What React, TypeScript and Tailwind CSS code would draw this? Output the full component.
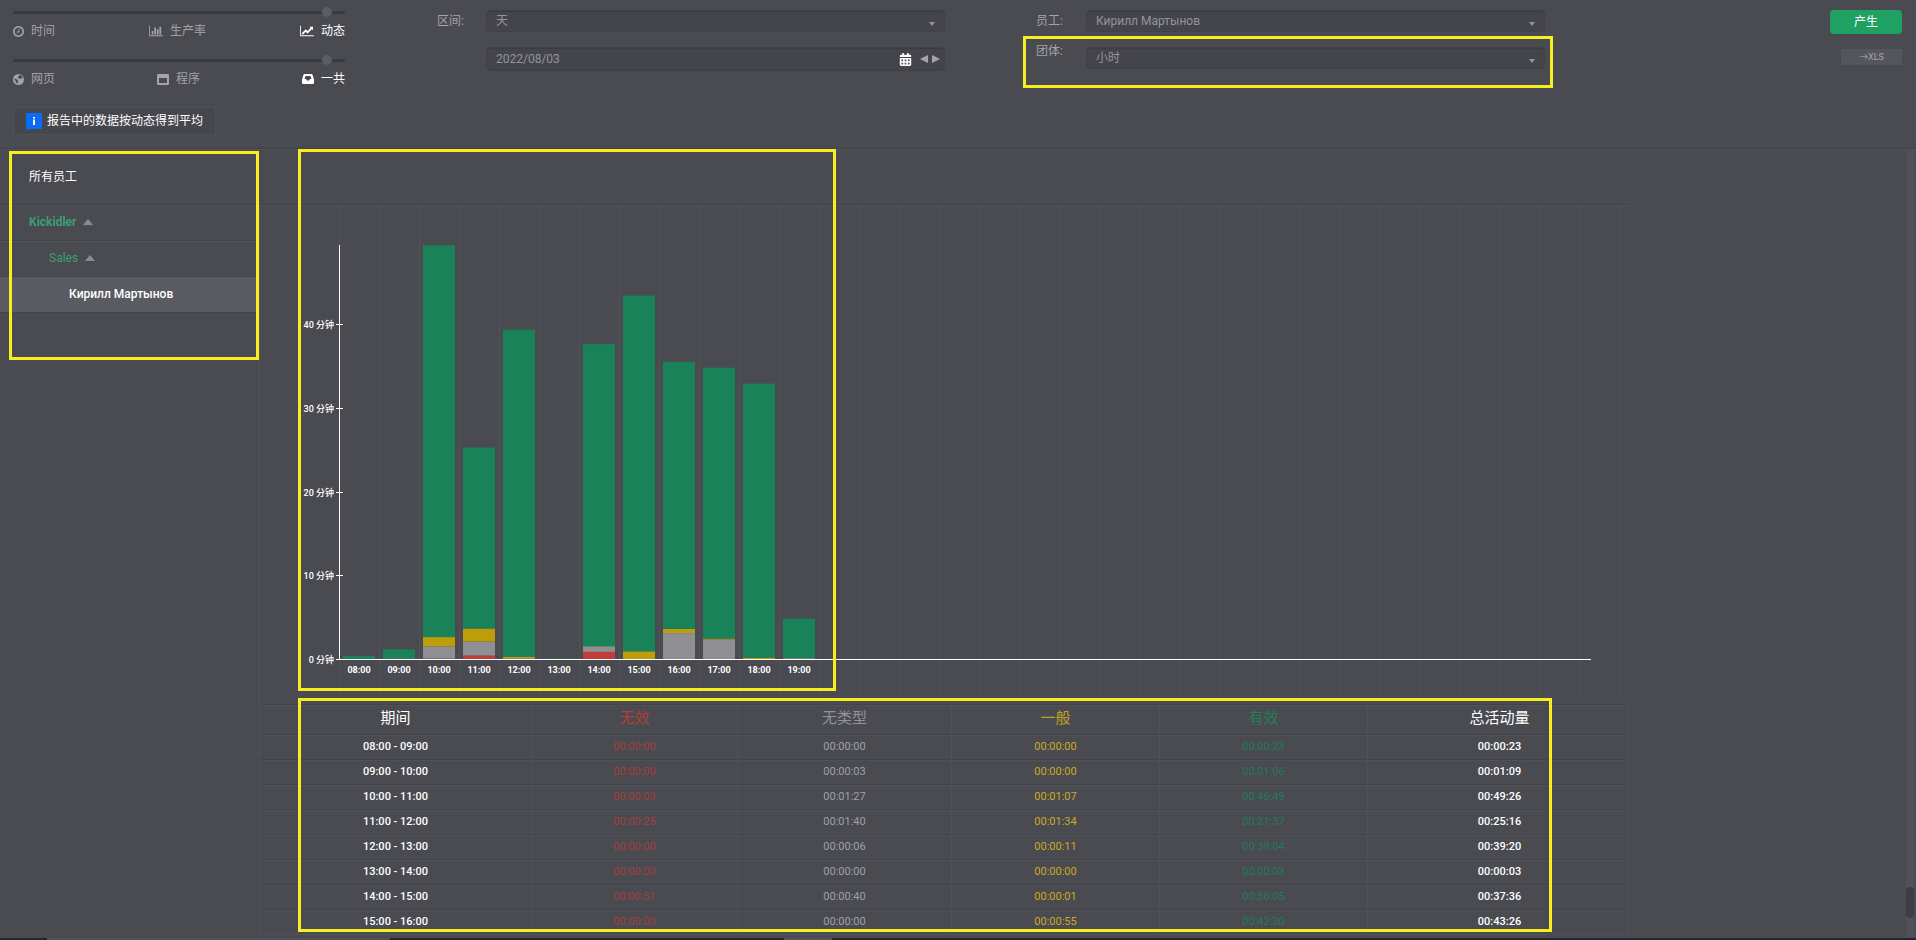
import { useState } from 'react';
import type { ReactNode } from 'react';
import { FaCalendarAlt } from 'react-icons/fa';

// One hour of activity, all durations in seconds
interface HourStat {
    from: string;
    to: string;
    unproductive: number;
    untyped: number;
    neutral: number;
    productive: number;
}

const stats: HourStat[] = [
    { from: '08:00', to: '09:00', unproductive: 0, untyped: 0, neutral: 0, productive: 23 },
    { from: '09:00', to: '10:00', unproductive: 0, untyped: 3, neutral: 0, productive: 66 },
    { from: '10:00', to: '11:00', unproductive: 3, untyped: 87, neutral: 67, productive: 2809 },
    { from: '11:00', to: '12:00', unproductive: 25, untyped: 100, neutral: 94, productive: 1297 },
    { from: '12:00', to: '13:00', unproductive: 0, untyped: 6, neutral: 11, productive: 2344 },
    { from: '13:00', to: '14:00', unproductive: 0, untyped: 0, neutral: 0, productive: 3 },
    { from: '14:00', to: '15:00', unproductive: 51, untyped: 40, neutral: 1, productive: 2165 },
    { from: '15:00', to: '16:00', unproductive: 0, untyped: 0, neutral: 55, productive: 2550 },
    { from: '16:00', to: '17:00', unproductive: 0, untyped: 186, neutral: 30, productive: 1914 },
    { from: '17:00', to: '18:00', unproductive: 0, untyped: 140, neutral: 7, productive: 1941 },
    { from: '18:00', to: '19:00', unproductive: 0, untyped: 0, neutral: 9, productive: 1965 },
    { from: '19:00', to: '20:00', unproductive: 0, untyped: 6, neutral: 0, productive: 283 },
];

const total = (s: HourStat) => s.unproductive + s.untyped + s.neutral + s.productive;

const formatTime = (sec: number) =>
    [Math.floor(sec / 3600), Math.floor(sec / 60) % 60, sec % 60]
        .map((n) => String(n).padStart(2, '0'))
        .join(':');

const reportedTotal: Record<string, number> = { '12:00': 2360, '14:00': 2256, '15:00': 2606 };

const ClockIcon = () => (
    <svg viewBox="128 128 1536 1536" className="size-[11px]" fill="currentColor" aria-hidden="true">
        <path d="M1024 544v448q0 14-9 23t-23 9h-320q-14 0-23-9t-9-23v-64q0-14 9-23t23-9h224v-352q0-14 9-23t23-9h64q14 0 23 9t9 23zm416 352q0-148-73-273t-198-198-273-73-273 73-198 198-73 273 73 273 198 198 273 73 273-73 198-198 73-273zm224 0q0 209-103 385.5t-279.5 279.5-385.5 103-385.5-103-279.500-279.500-103-385.500 103-385.500 279.500-279.500 385.500-103 385.500 103 279.500 279.500 103 385.500z" />
    </svg>
);

const BarsIcon = () => (
    <svg viewBox="0 0 2048 1792" className="h-3 w-3.5" fill="currentColor" aria-hidden="true">
        <path d="M640 896v512h-256v-512h256zm384-512v1024h-256v-1024h256zm1024 1152v128h-2048v-1536h128v1408h1920zm-640-896v768h-256v-768h256zm384-384v1152h-256v-1152h256z" />
    </svg>
);

const LineIcon = () => (
    <svg viewBox="0 0 2048 1792" className="h-3 w-3.5" fill="currentColor" aria-hidden="true">
        <path d="M2048 1536v128h-2048v-1536h128v1408h1920zm-128-1248v435q0 21-19.5 29.5t-35.5-7.5l-121-121-633 633q-10 10-23 10t-23-10l-233-233-416 416-192-192 585-585q10-10 23-10t23 10l233 233 464-464-121-121q-16-16-7.5-35.5t29.5-19.5h435q14 0 23 9t9 23z" />
    </svg>
);

const GlobeIcon = () => (
    <svg viewBox="0 0 22 22" className="size-[11px]" aria-hidden="true">
        <circle cx="11" cy="11" r="11" fill="currentColor" />
        <path d="M12 3l4-1 4 5-2 2-3-1-1 2-3-1-1-3zM3 9l5 2 3 3-2 2 0 4-3-3-1-4-3-3z" fill="#4a4a51" />
    </svg>
);

const WindowIcon = () => (
    <svg viewBox="0 0 12 11" className="h-[11px] w-3" fill="currentColor" fillRule="evenodd" aria-hidden="true">
        <path d="M1 0h10q1 0 1 1v9q0 1-1 1H1q-1 0-1-1V1q0-1 1-1zM2 4v5h8V4z" />
    </svg>
);

const InboxIcon = () => (
    <svg viewBox="0 0 12 10" className="h-2.5 w-3" fill="currentColor" fillRule="evenodd" aria-hidden="true">
        <path d="M2.500 0h7q.8 0 1 .8L12 5.500V9q0 1-1 1H1q-1 0-1-1V5.500L1.500.8q.2-.8 1-.8zM3.500 2L2.500 5H4l1 1.500h2L8 5h1.500l-1-3z" />
    </svg>
);

// Yellow frame laid over a part of the page
const Highlight = ({ className }: { className: string }) => (
    <div className={`pointer-events-none absolute z-10 border-3 border-[#f7ee22] ${className}`} />
);

interface ModeSliderProps {
    label: string;
    options: { icon: ReactNode; text: string }[];
}

const ModeSlider: React.FC<ModeSliderProps> = ({ label, options }) => {
    const [value, setValue] = useState(96);
    const active = Math.round((value / 100) * (options.length - 1));

    return (
        <div className="h-12">
            <input
                type="range"
                aria-label={label}
                value={value}
                onChange={(e) => setValue(Number(e.target.value))}
                className="block h-2.5 w-full appearance-none bg-transparent [&::-webkit-slider-runnable-track]:h-[3px] [&::-webkit-slider-runnable-track]:rounded-full [&::-webkit-slider-runnable-track]:bg-[#3a3a41] [&::-webkit-slider-thumb]:-mt-1 [&::-webkit-slider-thumb]:size-2.5 [&::-webkit-slider-thumb]:appearance-none [&::-webkit-slider-thumb]:rounded-full [&::-webkit-slider-thumb]:bg-[#5c5c66]"
            />
            <div className="flex justify-between pt-1">
                {options.map((option, i) => (
                    <button
                        key={option.text}
                        type="button"
                        onClick={() => setValue(i === 2 ? 96 : i * 50)}
                        className={`flex h-5 items-center gap-[7px] ${i === active ? 'text-white' : 'text-[#a3a3a9]'}`}
                    >
                        {option.icon}
                        <span>{option.text}</span>
                    </button>
                ))}
            </div>
        </div>
    );
};

const SelectBox = ({ id, options }: { id: string; options: string[] }) => (
    <div className="relative flex-1">
        <select
            id={id}
            className="block h-[22px] w-full appearance-none rounded-sm border border-[#414148] bg-[#44444b] pl-[9px] text-[#94949b] shadow-[inset_0_1px_1px_#3c3c43]"
        >
            {options.map((o) => (
                <option key={o}>{o}</option>
            ))}
        </select>
        <svg viewBox="0 0 6 4" className="pointer-events-none absolute right-2.5 bottom-1.5 h-1 w-1.5" fill="#94949b" aria-hidden="true">
            <path d="M0 0h6L3 4z" />
        </svg>
    </div>
);

const Header = () => {
    const [date, setDate] = useState('2022/08/03');

    return (
        <header className="flex h-[149px] shrink-0 items-start border-b border-[#414148] pr-3.5 pl-[13px]">
            <div className="w-[332px] shrink-0 pt-[7px]">
                <ModeSlider
                    label="报告类型"
                    options={[
                        { icon: <ClockIcon />, text: '时间' },
                        { icon: <BarsIcon />, text: '生产率' },
                        { icon: <LineIcon />, text: '动态' },
                    ]}
                />
                <ModeSlider
                    label="数据来源"
                    options={[
                        { icon: <GlobeIcon />, text: '网页' },
                        { icon: <WindowIcon />, text: '程序' },
                        { icon: <InboxIcon />, text: '一共' },
                    ]}
                />
                <div className="mt-1 inline-flex h-7 items-center gap-[5px] border border-[#505057] bg-[#46464d] px-3 text-white">
                    <svg viewBox="0 0 16 17" className="h-[17px] w-4" aria-hidden="true">
                        <path d="M1 0h14q1 0 1 1v14q0 1-1 1H4l-3 1q-1 0-1-1V1q0-1 1-1z" fill="#0a6cf5" />
                        <path d="M7 4h2v1.500H7zM7 6.500h2V12H7z" fill="#fff" />
                    </svg>
                    <span>报告中的数据按动态得到平均</span>
                </div>
            </div>

            <div className="ml-[92px] max-w-[508px] flex-1 space-y-[15px] pt-2.5">
                <div className="flex">
                    <label htmlFor="range" className="w-[49px] leading-[22px] text-[#a3a3a9]">区间:</label>
                    <SelectBox id="range" options={['天', '周', '月']} />
                </div>
                <div className="ml-[49px] flex h-6 items-center rounded-sm border border-[#414148] bg-[#44444b] pr-1 shadow-[inset_0_1px_1px_#3c3c43]">
                    <input
                        type="text"
                        aria-label="日期"
                        value={date}
                        onChange={(e) => setDate(e.target.value)}
                        className="min-w-0 flex-1 bg-transparent pl-[9px] text-[#94949b]"
                    />
                    <button type="button" aria-label="日历" className="mr-2 text-white">
                        <FaCalendarAlt className="size-[13px]" />
                    </button>
                    <button type="button" aria-label="前一天" className="mr-1">
                        <svg viewBox="0 0 8 8" className="size-2" fill="#a3a3a9"><path d="M8 0v8L0 4z" /></svg>
                    </button>
                    <button type="button" aria-label="后一天">
                        <svg viewBox="0 0 8 8" className="size-2" fill="#a3a3a9"><path d="M0 0v8l8-4z" /></svg>
                    </button>
                </div>
            </div>

            <div className="relative ml-[91px] max-w-[509px] flex-1 space-y-[15px] pt-2.5">
                <div className="flex">
                    <label htmlFor="employee" className="w-[50px] leading-[22px] text-[#a3a3a9]">员工:</label>
                    <SelectBox id="employee" options={['Кирилл Мартынов']} />
                </div>
                <div className="flex items-start">
                    <label htmlFor="group" className="w-[50px] leading-2 text-[#a3a3a9]">团体:</label>
                    <SelectBox id="group" options={['小时', '天']} />
                </div>
                <Highlight className="top-9 -right-2 -left-[13px] h-[52px]" />
            </div>

            <div className="ml-auto flex flex-col items-end gap-[15px] pt-2.5">
                <button type="button" className="h-6 w-[72px] rounded-sm bg-[#1ea163] text-white">产生</button>
                <button type="button" className="h-4 w-[61px] bg-[#55555d] text-[9px] text-[#a9a9af]">→XLS</button>
            </div>
        </header>
    );
};

const Up = () => (
    <svg viewBox="0 0 10 6" className="h-1.5 w-2.5" fill="#8b8b92" aria-hidden="true">
        <path d="M5 0l5 6H0z" />
    </svg>
);

const Sidebar = () => (
    <nav className="relative w-[259px] shrink-0">
        <h2 className="h-[55px] border-b border-[#414148] pt-[18px] pl-[29px] leading-[18px] text-white">所有员工</h2>
        <ul className="mr-[3px]">
            <li>
                <button type="button" className="flex h-9 w-full items-center gap-[7px] border-t border-b border-t-[#53535a] border-b-[#43434a] pb-0.5 pl-[29px] font-bold text-[#3a9f72]">
                    Kickidler <Up />
                </button>
            </li>
            <li>
                <button type="button" className="flex h-9 w-full items-center gap-[7px] border-t border-b border-t-[#53535a] border-b-[#43434a] pb-0.5 pl-[49px] text-[#3a9f72]">
                    Sales <Up />
                </button>
            </li>
            <li>
                <button type="button" className="flex h-9 w-full items-center border-b border-[#43434a] bg-[#5a5a61] pb-0.5 pl-[69px] font-medium text-white">
                    Кирилл Мартынов
                </button>
            </li>
        </ul>
        <Highlight className="top-px right-0 left-[9px] h-[209px]" />
    </nav>
);

const PX_PER_MIN = 8.37;
const BASE_Y = 453;
const AXIS_X = 79;
const STEP = 40;

const Chart = () => (
    <svg className="block h-[498px] w-full text-[9px] font-bold" role="img" aria-label="每小时活动量">
        {Array.from({ length: 33 }, (_, i) => (
            <rect key={i} x={AXIS_X + i * STEP} y={0} width={1} height={491} fill="#515158" />
        ))}
        {stats.map((s, i) => {
            const parts = [
                { value: s.unproductive, fill: '#bd3f35' },
                { value: s.untyped, fill: '#8e8e93' },
                { value: s.neutral, fill: '#bd9d0a' },
                { value: s.productive, fill: '#1a8258' },
            ];
            let y = BASE_Y;
            return (
                <g key={s.from}>
                    {parts.map((p) => {
                        const h = (p.value / 60) * PX_PER_MIN;
                        y -= h;
                        return <rect key={p.fill} x={AXIS_X + 4 + i * STEP} y={y} width={32} height={h} fill={p.fill} />;
                    })}
                    <text x={AXIS_X + 20 + i * STEP} y={BASE_Y + 14} textAnchor="middle" fill="#fff">
                        {s.from}
                    </text>
                </g>
            );
        })}
        <rect x={AXIS_X} y={39} width={1} height={415} fill="#fff" />
        <rect x={AXIS_X} y={BASE_Y} width={1252} height={1} fill="#fff" />
        {[0, 10, 20, 30, 40].map((m) => {
            const y = Math.round(BASE_Y - m * PX_PER_MIN);
            return (
                <g key={m}>
                    <rect x={AXIS_X - 3} y={y} width={7} height={1} fill="#fff" />
                    <text x={AXIS_X - 5} y={y + 4} textAnchor="end" fill="#fff" className="font-medium">{m} 分钟</text>
                </g>
            );
        })}
    </svg>
);

const cell = 'border-t border-r border-t-[#42424a] border-r-[#505058] p-0 text-center shadow-[inset_0_1px_0_#505058]';

const StatsTable = () => (
    <table className="w-full table-fixed border-separate border-spacing-0 text-[11px]">
        <colgroup>
            <col className="w-[272px]" />
            <col className="w-[206px]" />
            <col className="w-[214px]" />
            <col className="w-[208px]" />
            <col className="w-[208px]" />
            <col />
        </colgroup>
        <thead>
            <tr className="h-[30px] text-[15px]">
                <th className={`${cell} pb-0.5 font-normal text-white`}>期间</th>
                <th className={`${cell} pb-0.5 font-normal text-[#b23f38]`}>无效</th>
                <th className={`${cell} pb-0.5 font-normal text-[#929298]`}>无类型</th>
                <th className={`${cell} pb-0.5 font-normal text-[#c0a21c]`}>一般</th>
                <th className={`${cell} pb-0.5 font-normal text-[#1f8159]`}>有效</th>
                <th className={`${cell} pb-0.5 pl-1 font-normal text-white`}>总活动量</th>
            </tr>
        </thead>
        <tbody>
            {stats.slice(0, 8).map((s) => (
                <tr key={s.from} className="h-[25px]">
                    <td className={`${cell} font-medium text-white`}>{s.from} - {s.to}</td>
                    <td className={`${cell} text-[#a33f3c]`}>{formatTime(s.unproductive)}</td>
                    <td className={`${cell} text-[#a0a0a5]`}>{formatTime(s.untyped)}</td>
                    <td className={`${cell} text-[#c9ab22]`}>{formatTime(s.neutral)}</td>
                    <td className={`${cell} text-[#247a58]`}>{formatTime(s.productive)}</td>
                    <td className={`${cell} pl-1 font-medium text-white`}>{formatTime(reportedTotal[s.from] ?? total(s))}</td>
                </tr>
            ))}
        </tbody>
    </table>
);

export default function App() {
    return (
        <div className="flex h-screen flex-col overflow-hidden bg-[#4a4a51] font-['Roboto','Noto_Sans_CJK_SC',sans-serif] text-xs">
            <Header />
            <div className="flex min-h-0 flex-1 border-t border-[#53535a]">
                <Sidebar />
                <main className="mr-[278px] min-w-0 flex-1">
                    <section className="relative">
                        <div className="h-[55px] border-b border-[#414148]" />
                        <div className="border-t border-l border-[#53535a]">
                            <Chart />
                        </div>
                        <Highlight className="-top-px left-[39px] h-[542px] w-[538px]" />
                    </section>
                    <section className="relative border-b border-l border-[#505058]">
                        <StatsTable />
                        <Highlight className="-top-1.5 right-[76px] bottom-0.5 left-[38px]" />
                    </section>
                </main>
                <div className="mr-0.5 w-2 bg-[#505058]">
                    <div className="mt-[737px] h-[31px] rounded-sm bg-[#3d3d44]" />
                </div>
            </div>
            <footer className="flex h-0.5 shrink-0 bg-[#26262b]">
                <div className="ml-[47px] w-[343px] bg-[#505055]" />
                <div className="ml-[394px] w-12 bg-[#55555b]" />
            </footer>
        </div>
    );
}
